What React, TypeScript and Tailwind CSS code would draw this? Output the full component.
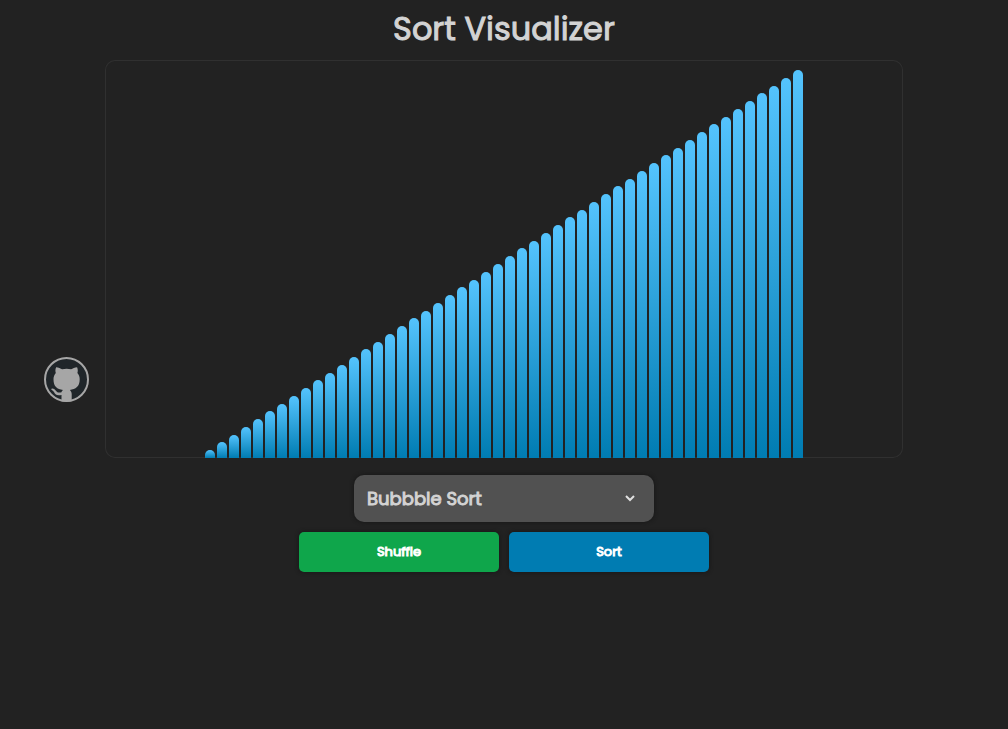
const BAR_COUNT = 50;
const bars = Array.from({ length: BAR_COUNT }, (_, i) => i + 1);

function GitHubMark() {
  return (
    <svg viewBox="0 0 45 45" className="size-full" aria-hidden="true">
      <circle cx="22.5" cy="22.5" r="21.5" fill="#20262a" stroke="#a6a6a6" strokeWidth="2" />
      <path
        fill="#a6a6a6"
        d="M12.1 10.2c2.3 0 4.6 1.2 6 2.1 2.9-.8 6.2-.8 9 0 1.5-.9 3.700-2.1 6-2.1.8 1.800.9 4 .3 5.700 1.700 1.800 2.300 4 2.300 6.300 0 7.300-4 10-9.900 10.700 1 .9 1.900 2.100 1.900 4.200v7c-3.200.9-7 .9-10.200 0v-6c-5.300 1-6.500-1-7.500-3-.6-1.200-1.400-1.700-2.200-2.200-.9-.7-.6-1.500.4-1.500 1.900 0 2.900 1.100 3.700 2.300 1.300 2 3.300 2.300 5.600 1.500.2-1.200.8-1.700 1.500-2.300-5.900-.7-9.500-3.300-9.500-10.700 0-2.300.7-4.500 2.300-6.300-.6-1.700-.5-3.900.3-5.700Z"
      />
    </svg>
  );
}

export default function App() {
  return (
    <div className="min-h-screen bg-[#222222] font-['Poppins','Inter',sans-serif] text-[#d3d3d3]">
      <h1 className="pt-[5px] text-center text-[32px] leading-[48px] font-normal [-webkit-text-stroke:1px_currentColor]">
        Sort Visualizer
      </h1>

      <main className="pt-[7px]">
        <div className="grid grid-cols-[105px_minmax(0,1fr)_105px]">
          <a
            href="https://github.com"
            aria-label="GitHub"
            className="mr-4 mb-14 size-[45px] self-end justify-self-end"
          >
            <GitHubMark />
          </a>
          <section
            aria-label="Values"
            className="flex h-[398px] items-end justify-center gap-0.5 rounded-[10px] bg-[#222222] pt-2.5 shadow-[inset_0_0_0_1px_#303030]"
          >
            {bars.map((value) => (
              <div
                key={value}
                className="w-2.5 rounded-t-[5px] bg-[linear-gradient(#54c3fd,#007cb2)]"
                style={{ height: `${(value / BAR_COUNT) * 100}%` }}
              />
            ))}
          </section>
        </div>

        <div className="mt-[17px] flex flex-col items-center gap-2.5">
          <div className="relative w-[300px]">
            <select
              aria-label="Algorithm"
              className="h-[47px] w-full appearance-none rounded-[10px] bg-[#515151] px-[13px] text-lg font-normal text-[#d3d3d3] shadow-[0_0_4px_#151515] [-webkit-text-stroke:1px_currentColor]"
            >
              <option>Bubbble Sort</option>
              <option>Selection Sort</option>
              <option>Insertion Sort</option>
            </select>
            <svg
              viewBox="0 0 10 8"
              className="pointer-events-none absolute top-5 right-[19px] h-2 w-2.5"
              fill="none"
              stroke="#e0e0e0"
              strokeWidth="2"
              aria-hidden="true"
            >
              <path d="M1 1 5 5 9 1" />
            </svg>
          </div>
          <div className="flex gap-2.5">
            <button
              type="button"
              className="h-10 w-[200px] rounded-[5px] bg-[#0fa64b] text-[13px] font-normal text-white shadow-[0_0_4px_#151515] [-webkit-text-stroke:1px_currentColor]"
            >
              Shuffle
            </button>
            <button
              type="button"
              className="h-10 w-[200px] rounded-[5px] bg-[#007cb2] text-[13px] font-normal text-white shadow-[0_0_4px_#151515] [-webkit-text-stroke:1px_currentColor]"
            >
              Sort
            </button>
          </div>
        </div>
      </main>
    </div>
  );
}
